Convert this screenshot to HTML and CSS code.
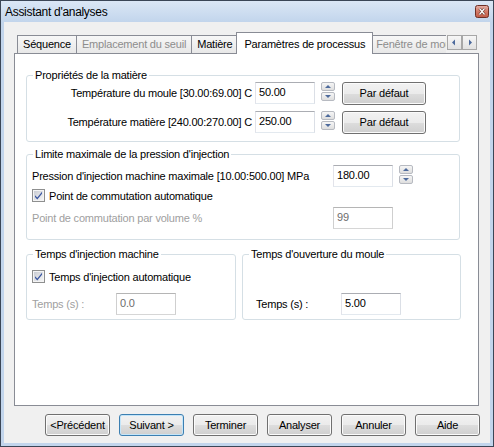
FILE: index.html
```html
<!DOCTYPE html>
<html lang="fr">
<head>
<meta charset="utf-8">
<title>Assistant d'analyses</title>
<link rel="stylesheet" href="styles.css">
</head>
<body>
<div class="window">
  <div class="titlebar">
    <span class="title">Assistant d'analyses</span>
    <span class="close">
      <svg width="14" height="13" viewBox="0 0 14 13">
        <defs>
          <linearGradient id="cg" x1="0" y1="0" x2="0" y2="1">
            <stop offset="0" stop-color="#e7b2a8"/>
            <stop offset="0.5" stop-color="#d27a68"/>
            <stop offset="1" stop-color="#c05a46"/>
          </linearGradient>
        </defs>
        <rect x="0.5" y="0.5" width="13" height="12" rx="2" fill="url(#cg)" stroke="#6e3026"/>
        <path d="M4.5 3.5 L9.5 9.5 M9.5 3.5 L4.5 9.5" stroke="#5a2a22" stroke-width="2.6"/>
        <path d="M4.5 3.5 L9.5 9.5 M9.5 3.5 L4.5 9.5" stroke="#ffffff" stroke-width="1.3"/>
      </svg>
    </span>
  </div>
  <div class="body">
    <div class="tabstrip">
      <div class="tablist">
        <div class="tab first">Séquence</div>
        <div class="tab disabled">Emplacement du seuil</div>
        <div class="tab">Matière</div>
        <div class="tab active">Paramètres de processus</div>
        <div class="tab disabled">Fenêtre de moulage</div>
      </div>
      <div class="scroller">
        <span class="sbtn"><svg width="13" height="13" viewBox="0 0 13 13"><path d="M4 6.5 L7 3.5 L7 9.5 Z" fill="#4d6a9c"/></svg></span>
        <span class="sbtn"><svg width="13" height="13" viewBox="0 0 13 13"><path d="M9 6.5 L6 3.5 L6 9.5 Z" fill="#4d6a9c"/></svg></span>
      </div>
    </div>
    <div class="panel">
      <fieldset class="group g1">
        <legend>Propriétés de la matière</legend>
        <div class="row">
          <span class="rlabel">Température du moule [30.00:69.00] C</span>
          <span class="field">50.00</span>
          <span class="spin">
            <span class="sp"><svg width="12" height="7" viewBox="0 0 12 7"><path d="M3 5 L6 2 L9 5 Z" fill="#4d6a9c"/></svg></span>
            <span class="sp"><svg width="12" height="7" viewBox="0 0 12 7"><path d="M3 2 L6 5 L9 2 Z" fill="#4d6a9c"/></svg></span>
          </span>
          <span class="btn wide">Par défaut</span>
        </div>
        <div class="row second">
          <span class="rlabel">Température matière [240.00:270.00] C</span>
          <span class="field">250.00</span>
          <span class="spin">
            <span class="sp"><svg width="12" height="7" viewBox="0 0 12 7"><path d="M3 5 L6 2 L9 5 Z" fill="#4d6a9c"/></svg></span>
            <span class="sp"><svg width="12" height="7" viewBox="0 0 12 7"><path d="M3 2 L6 5 L9 2 Z" fill="#4d6a9c"/></svg></span>
          </span>
          <span class="btn wide">Par défaut</span>
        </div>
      </fieldset>

      <fieldset class="group g2">
        <legend>Limite maximale de la pression d'injection</legend>
        <div class="row r-press">
          <span class="llabel">Pression d'injection machine maximale [10.00:500.00] MPa</span>
          <span class="field">180.00</span>
          <span class="spin">
            <span class="sp"><svg width="12" height="7" viewBox="0 0 12 7"><path d="M3 5 L6 2 L9 5 Z" fill="#4d6a9c"/></svg></span>
            <span class="sp"><svg width="12" height="7" viewBox="0 0 12 7"><path d="M3 2 L6 5 L9 2 Z" fill="#4d6a9c"/></svg></span>
          </span>
        </div>
        <div class="check-row">
          <span class="cb"><svg width="13" height="13" viewBox="0 0 13 13"><defs><linearGradient id="cbg" x1="0" y1="0" x2="1" y2="1"><stop offset="0" stop-color="#c9ccd3"/><stop offset="1" stop-color="#f4f4f4"/></linearGradient></defs><rect x="0.5" y="0.5" width="12" height="12" fill="#f4f4f4" stroke="#8e8f8f"/><rect x="2" y="2" width="9" height="9" fill="url(#cbg)"/><path d="M3 6.2 L5.3 8.6 L10 2.8 L10 4.8 L5.3 10.4 L3 8 Z" fill="#3a56a0"/></svg></span>
          <span class="clabel">Point de commutation automatique</span>
        </div>
        <div class="row r-vol">
          <span class="llabel dim">Point de commutation par volume %</span>
          <span class="field disabled">99</span>
        </div>
      </fieldset>

      <div class="split">
        <fieldset class="group g3">
          <legend>Temps d'injection machine</legend>
          <div class="check-row c3">
            <span class="cb"><svg width="13" height="13" viewBox="0 0 13 13"><rect x="0.5" y="0.5" width="12" height="12" fill="#f4f4f4" stroke="#8e8f8f"/><rect x="2" y="2" width="9" height="9" fill="url(#cbg)"/><path d="M3 6.2 L5.3 8.6 L10 2.8 L10 4.8 L5.3 10.4 L3 8 Z" fill="#3a56a0"/></svg></span>
            <span class="clabel">Temps d'injection automatique</span>
          </div>
          <div class="row r-t3">
            <span class="tlabel dim">Temps (s) :</span>
            <span class="field disabled">0.0</span>
          </div>
        </fieldset>
        <fieldset class="group g4">
          <legend>Temps d'ouverture du moule</legend>
          <div class="row r-t4">
            <span class="tlabel4">Temps (s) :</span>
            <span class="field">5.00</span>
          </div>
        </fieldset>
      </div>
    </div>
    <div class="buttons">
      <span class="btn">&lt;Précédent</span>
      <span class="btn default">Suivant &gt;</span>
      <span class="btn">Terminer</span>
      <span class="btn">Analyser</span>
      <span class="btn">Annuler</span>
      <span class="btn">Aide</span>
    </div>
  </div>
</div>
</body>
</html>
```

FILE: styles.css
```css
* { box-sizing: border-box; }
html, body { margin: 0; padding: 0; }
body {
  font-family: "Liberation Sans", Arial, sans-serif;
  font-size: 11px;
  letter-spacing: -0.2px;
  color: #000;
  background: #fff;
}
.window {
  width: 494px;
  height: 447px;
  border: 1px solid #3b4656;
  background: #c2d5ec;
  display: flex;
  flex-direction: column;
}
.titlebar {
  height: 21px;
  flex: none;
  display: flex;
  align-items: center;
  padding-left: 4px;
  background: linear-gradient(#dbe7f5, #c2d5ec);
}
.title { font-size: 12px; letter-spacing: -0.3px; }
.close { margin-left: auto; margin-right: 4px; height: 13px; display: block; }
.close svg { display: block; }

.body {
  flex: 1;
  margin: 0 3px 3px;
  background: #f0f0f0;
  padding: 10px 0 0 10px;
  display: flex;
  flex-direction: column;
}

/* tabs */
.tabstrip {
  display: flex;
  align-items: flex-end;
  height: 22px;
  margin-left: 3px;
  margin-bottom: -1px;
  position: relative;
  z-index: 1;
}
.tablist {
  display: flex;
  align-items: flex-end;
  width: 429px;
  height: 22px;
  overflow: hidden;
  flex: none;
}
.tab {
  flex: none;
  height: 19px;
  padding: 0 5px;
  line-height: 17px;
  white-space: nowrap;
  border-top: 1px solid #898c95;
  border-right: 1px solid #898c95;
  border-bottom: 1px solid #898c95;
  background: linear-gradient(#f7f7f7, #e8e8e8);
}
.tab.first { border-left: 1px solid #898c95; }
.tab.disabled { color: #8d8d8d; }
.tab.active {
  height: 22px;
  padding: 3px 7px 0;
  margin: 0 -2px;
  border-left: 1px solid #898c95;
  border-bottom: none;
  background: #fff;
  position: relative;
  z-index: 2;
}
.scroller {
  display: flex;
  margin-left: 1px;
  margin-bottom: 4px;
}
.sbtn {
  width: 15px;
  height: 15px;
  border: 1px solid #a7a7a7;
  background: linear-gradient(#f6f6f6, #e2e2e2);
  display: flex;
  align-items: center;
  justify-content: center;
}
.sbtn svg { display: block; }

/* panel */
.panel {
  width: 465px;
  height: 353px;
  flex: none;
  border: 1px solid #898c95;
  background: #fff;
  padding: 14px 0 0 11px;
}
.group {
  margin: 0;
  padding: 0;
  min-width: 0;
  border: 1px solid #d5dfe5;
  border-radius: 3px;
}
.group legend {
  margin-left: 6px;
  padding: 0 2px;
  line-height: 14px;
  height: 14px;
}
.g1 { width: 434px; padding-bottom: 8px; }
.g2 { width: 434px; margin-top: 5px; padding-bottom: 10px; }
.g2 .row, .g2 .check-row { padding-left: 5px; }
.split { display: flex; gap: 6px; margin-top: 7px; }
.g3 { width: 210px; padding-bottom: 4px; }
.g3 .row, .g3 .check-row { padding-left: 5px; }
.g4 { width: 219px; padding-bottom: 4px; }
.g4 .row { padding-left: 13px; }

.row {
  display: flex;
  align-items: center;
  height: 22px;
}
.row.second { margin-top: 7px; }
.rlabel { width: 225px; text-align: right; margin-right: 3px; white-space: nowrap; }
.llabel { width: 301px; white-space: nowrap; }
.tlabel { width: 84px; }
.tlabel4 { width: 85px; }
.dim { color: #a0a0a0; }

.field {
  width: 60px;
  height: 22px;
  border: 1px solid #abadb3;
  border-color: #abadb3 #dbdfe6 #e3e9ef #e2e3ea;
  background: #fff;
  padding-left: 3px;
  line-height: 18px;
}
.field.disabled { color: #6d6d6d; border-color: #b5b5b5 #cfcfcf #d6d6d6 #cfcfcf; }

.spin {
  display: flex;
  flex-direction: column;
  gap: 1px;
  margin-left: 6px;
  align-self: flex-start;
}
.sp {
  width: 14px;
  height: 9px;
  border: 1px solid #b7bac1;
  border-radius: 2px;
  background: linear-gradient(#f6f6f6, #dedede);
  display: flex;
  align-items: center;
  justify-content: center;
}
.sp svg { display: block; }

.btn {
  display: block;
  height: 23px;
  border: 1px solid #707070;
  border-radius: 3px;
  background: linear-gradient(#f2f2f2 0%, #ebebeb 50%, #dddddd 51%, #cfcfcf 100%);
  box-shadow: inset 0 0 0 1px #fbfbfb;
  text-align: center;
  line-height: 21px;
  white-space: nowrap;
}
.btn.wide { width: 84px; margin-left: 7px; }

.r-press { margin-top: 4px; }
.check-row {
  display: flex;
  align-items: center;
  height: 15px;
  margin-top: 1px;
}
.cb { width: 13px; height: 13px; margin-right: 4px; }
.cb svg { display: block; }
.r-vol { margin-top: 4px; }
.c3 { margin-top: 8px; }
.r-t3 { margin-top: 9px; }
.r-t4 { margin-top: 32px; }

/* bottom buttons */
.buttons {
  display: flex;
  gap: 9px;
  margin-top: 8px;
  padding-left: 31px;
}
.buttons .btn { width: 65px; height: 22px; line-height: 20px; }
.btn.default { border-color: #3c7fb1; box-shadow: inset 0 0 0 1px #c4e5f9; }
```
